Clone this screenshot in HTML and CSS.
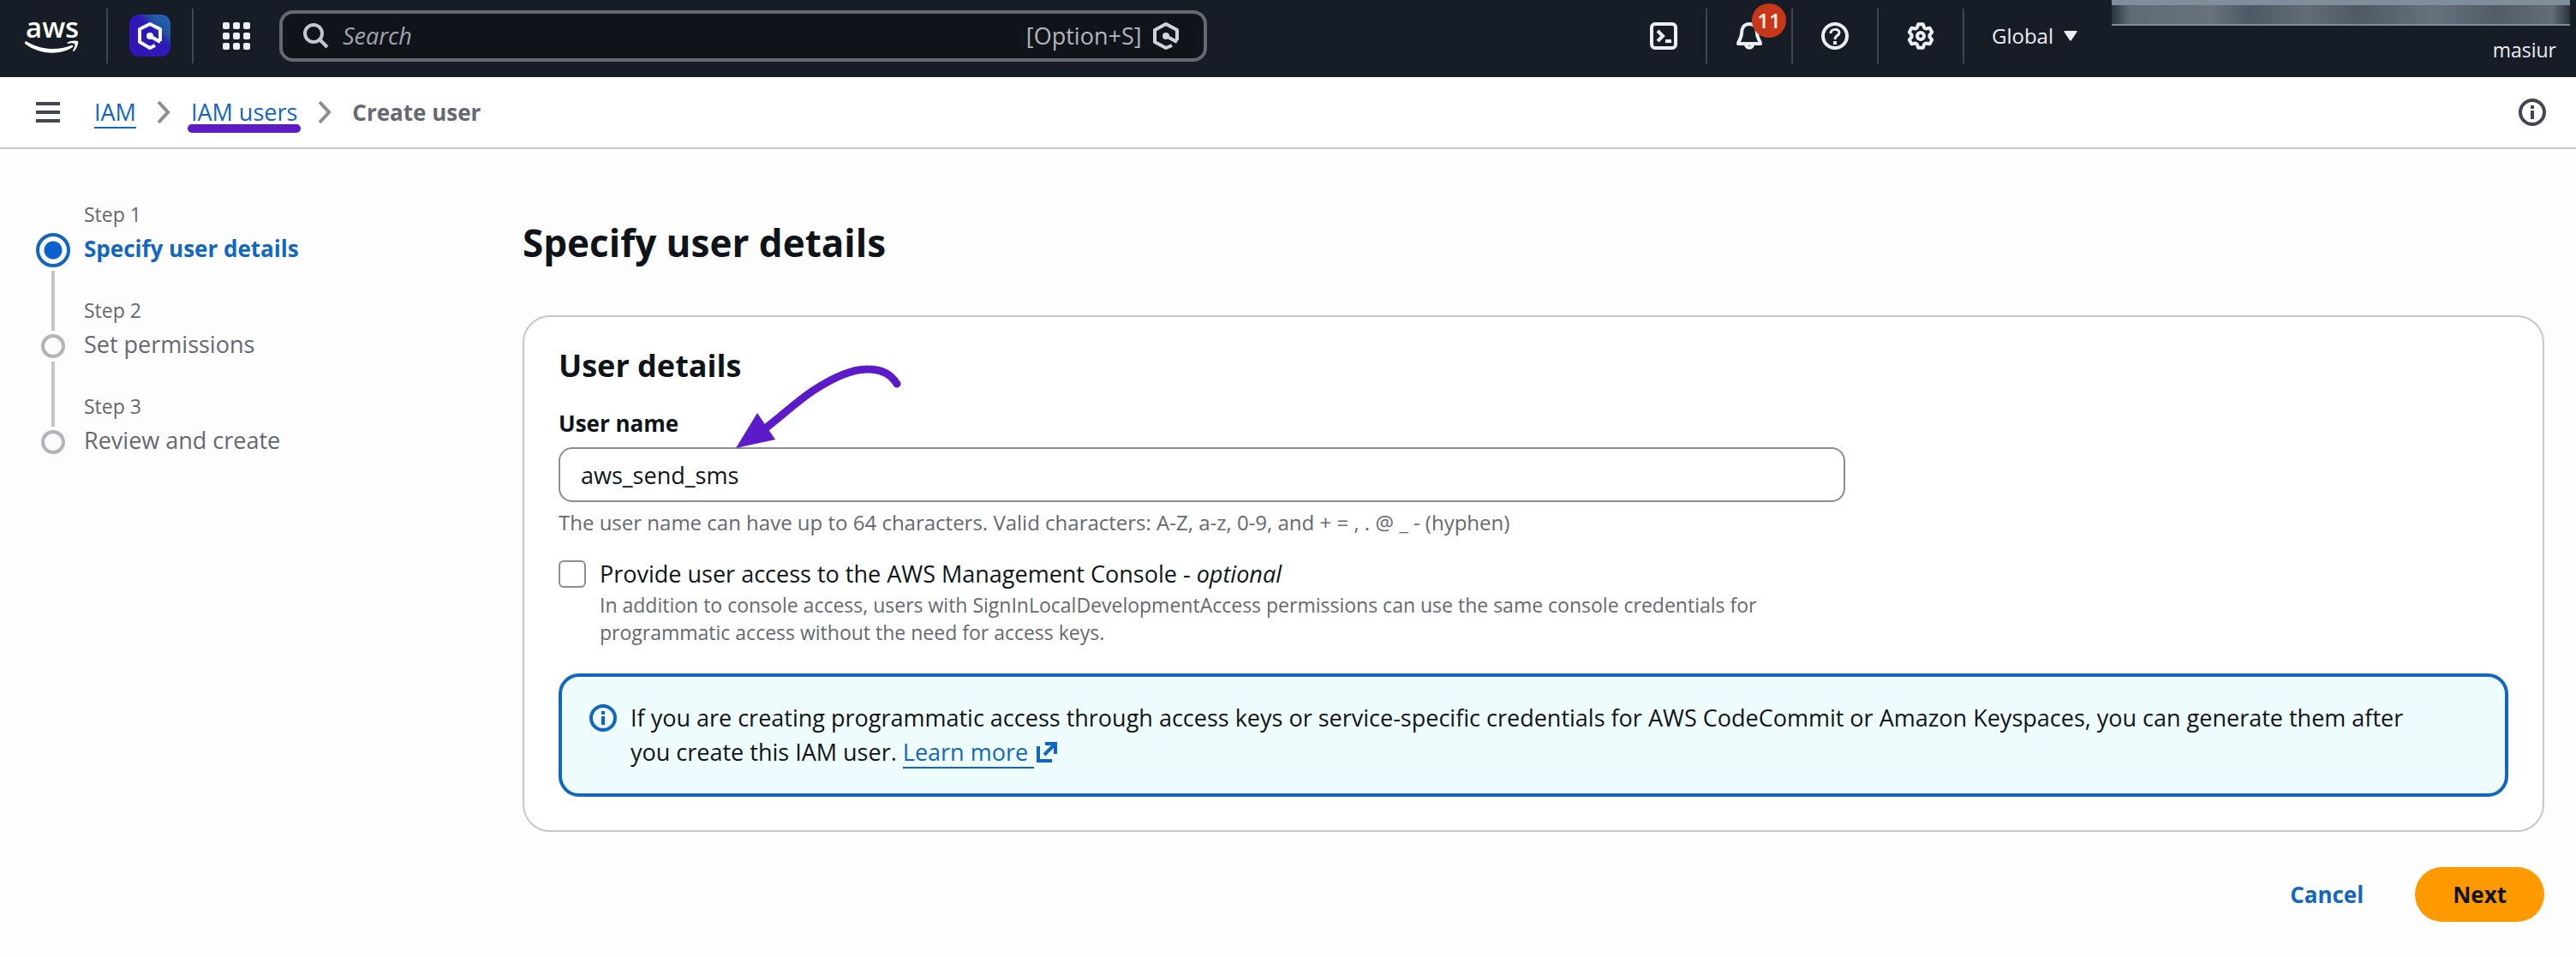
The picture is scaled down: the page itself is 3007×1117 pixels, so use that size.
FILE: index.html
```
<!DOCTYPE html>
<html lang="en">
<head>
    <meta charset="UTF-8">
    <meta name="viewport" content="width=device-width, initial-scale=1.0">
    <title>Create user | IAM</title>
    <link rel="stylesheet" href="styles.css">
</head>
<body>

    <header class="topnav">
        <a class="nav-logo" href="#" aria-label="AWS home">
            <svg width="72" height="64" viewBox="-2 -12 72 64" fill="#fff">
                <text x="2" y="22" class="logo-text">aws</text>
                <path d="M1 27 C2 26 3 26 4 27 C22 37 40 37 55 31 C57 30 58 32 57 33 C42 43 18 42 1 29 Z"/>
                <path d="M50 28 C54 25 60 25 63 26 C64 29 61 36 58 38 C57 38 57 37 57 37 C59 34 60 30 59 29 C57 28 54 28 51 29 Z"/>
            </svg>
        </a>
        <button class="nav-item" aria-label="Amazon Q">
            <svg width="48" height="50" viewBox="0 0 48 50">
                <defs>
                    <linearGradient id="q-fill" x1="1" y1="0" x2="0" y2="1">
                        <stop offset="0" stop-color="#1f6fb8"/>
                        <stop offset="0.28" stop-color="#24509f"/>
                        <stop offset="0.4" stop-color="#2d1ab8"/>
                        <stop offset="1" stop-color="#3313b4"/>
                    </linearGradient>
                </defs>
                <rect width="48" height="49" rx="11" fill="url(#q-fill)"/>
                <g fill="none" stroke="#f3f7ff" stroke-width="4" stroke-linejoin="round">
                    <path d="M36 31V17L24 11 12 17v15l12 7 6-3"/>
                    <path d="M24 25l12 7"/>
                </g>
                <circle cx="24" cy="25" r="4" fill="#f3f7ff"/>
            </svg>
        </button>
        <button class="nav-item nav-last" aria-label="Services">
            <svg width="32" height="32" viewBox="0 0 32 32" fill="#ebeff5">
                <rect x="0" y="0" width="8" height="8" rx="2"/>
                <rect x="12" y="0" width="8" height="8" rx="2"/>
                <rect x="24" y="0" width="8" height="8" rx="2"/>
                <rect x="0" y="12" width="8" height="8" rx="2"/>
                <rect x="12" y="12" width="8" height="8" rx="2"/>
                <rect x="24" y="12" width="8" height="8" rx="2"/>
                <rect x="0" y="24" width="8" height="8" rx="2"/>
                <rect x="12" y="24" width="8" height="8" rx="2"/>
                <rect x="24" y="24" width="8" height="8" rx="2"/>
            </svg>
        </button>

        <div class="search">
            <svg width="32" height="32" viewBox="0 0 32 32" fill="none" stroke="#c6c6cd" stroke-width="4">
                <circle cx="14" cy="13" r="10"/>
                <path d="M21 20l9 9"/>
            </svg>
            <input type="text" id="search" placeholder="Search" aria-label="Search">
            <label for="search">[Option+S]</label>
            <svg width="32" height="32" viewBox="0 0 32 32" fill="none" stroke="#d0d4d8" stroke-width="4" stroke-linejoin="round">
                <path d="M29 21V9L16 2 3 9v14l13 7 7-3"/>
                <path d="M16 16l13 7"/>
                <circle cx="16" cy="16" r="2"/>
            </svg>
        </div>

        <nav class="tools">
            <button class="nav-item" aria-label="CloudShell">
                <svg width="32" height="32" viewBox="0 0 32 32" fill="none" stroke="#ebeff5" stroke-width="4">
                    <rect x="2" y="2" width="28" height="28" rx="4"/>
                    <path d="M9 10l6 6-6 6M18 22h7"/>
                </svg>
            </button>
            <button class="nav-item" aria-label="Notifications">
                <svg width="32" height="32" viewBox="0 0 32 32" fill="none" stroke="#ebeff5" stroke-width="4" stroke-linejoin="round">
                    <path d="M16 2C9 2 7 8 7 13C7 19 3 22 3 25H29C29 22 25 19 25 13C25 8 23 2 16 2Z"/>
                    <path d="M12 26c0 5 8 5 8 0"/>
                </svg>
                <span class="badge">11</span>
            </button>
            <button class="nav-item" aria-label="Help">
                <svg width="32" height="32" viewBox="0 0 32 32" fill="none" stroke="#ebeff5" stroke-width="4">
                    <circle cx="16" cy="16" r="14"/>
                    <path d="M11 13C11 7 21 7 21 12C21 16 16 15 16 20" stroke-width="3"/>
                    <path d="M16 22v4"/>
                </svg>
            </button>
            <button class="nav-item" aria-label="Settings">
                <svg width="32" height="32" viewBox="0 0 32 32" fill="none" stroke="#ebeff5" stroke-width="4" stroke-linejoin="round">
                    <path d="M11.7 6.4L13.3 2.3H18.7L20.3 6.4L22.2 7.5L26.6 6.8L29.2 11.4L26.4 14.9V17.1L29.2 20.6L26.6 25.2L22.2 24.5L20.3 25.6L18.7 29.7H13.3L11.7 25.6L9.8 24.5L5.4 25.2L2.8 20.6L5.6 17.1V14.9L2.8 11.4L5.4 6.8L9.8 7.5Z"/>
                    <circle cx="16" cy="16" r="4"/>
                </svg>
            </button>
            <button class="region">
                Global
                <svg width="16" height="12" viewBox="0 0 16 12" fill="#ebeff5"><path d="M1 0h14q1 0 .6 1L9 11q-1 1-2 0L.4 1Q0 0 1 0z"/></svg>
            </button>
            <div class="account">
                <div class="redacted"></div>
                <span>masiur</span>
            </div>
        </nav>
    </header>

    <div class="crumb-bar">
        <button class="icon-button" aria-label="Open navigation">
            <svg width="28" height="24" viewBox="0 0 28 24" fill="#424650">
                <path d="M0 0h28v4H0zM0 10h28v4H0zM0 20h28v4H0z"/>
            </svg>
        </button>
        <nav class="crumbs">
            <a href="#">IAM</a>
            <svg width="16" height="28" viewBox="0 0 16 28" fill="none" stroke="#8c8c94" stroke-width="4"><path d="M2 2l11 12L2 26"/></svg>
            <a class="marked" href="#">IAM users</a>
            <svg width="16" height="28" viewBox="0 0 16 28" fill="none" stroke="#8c8c94" stroke-width="4"><path d="M2 2l11 12L2 26"/></svg>
            <span class="current">Create user</span>
        </nav>
        <button class="icon-button" aria-label="Info">
            <svg width="32" height="32" viewBox="0 0 32 32" fill="none" stroke="#424650" stroke-width="4">
                <circle cx="16" cy="16" r="14"/>
                <path d="M16 8v4M16 14v10"/>
            </svg>
        </button>
    </div>

    <div class="layout">
        <ol class="steps">
            <li class="step active">
                <span class="track"><span class="dot"></span></span>
                <div class="step-text"><small>Step 1</small><b>Specify user details</b></div>
            </li>
            <li class="step">
                <span class="track"><span class="dot"></span></span>
                <div class="step-text"><small>Step 2</small><span>Set permissions</span></div>
            </li>
            <li class="step">
                <span class="track"><span class="dot"></span></span>
                <div class="step-text"><small>Step 3</small><span>Review and create</span></div>
            </li>
        </ol>

        <main class="content">
            <h1>Specify user details</h1>

            <section class="card">
                <h2>User details</h2>
                <div class="field">
                    <label for="user-name">User name</label>
                    <input type="text" id="user-name" value="aws_send_sms">
                    <p class="hint">The user name can have up to 64 characters. Valid characters: A-Z, a-z, 0-9, and + = , . @ _ - (hyphen)</p>
                </div>
                <div class="check">
                    <input type="checkbox" id="console-access">
                    <div>
                        <label for="console-access">Provide user access to the AWS Management Console - <em>optional</em></label>
                        <p class="description">In addition to console access, users with SignInLocalDevelopmentAccess permissions can use the same console credentials for programmatic access without the need for access keys.</p>
                    </div>
                </div>
                <div class="alert">
                    <svg width="32" height="32" viewBox="0 0 32 32" fill="none" stroke="#1166c0" stroke-width="4">
                        <circle cx="16" cy="16" r="14"/>
                        <path d="M16 8v4M16 14v10"/>
                    </svg>
                    <p>If you are creating programmatic access through access keys or service-specific credentials for AWS CodeCommit or Amazon Keyspaces, you can generate them after you create this IAM user. <a href="#">Learn more&nbsp;</a>
                        <svg width="24" height="24" viewBox="0 0 24 24" fill="none" stroke="#1166c0" stroke-width="4">
                            <path d="M10 2h12v12M21 3L9 15M2 5v17h16"/>
                        </svg>
                    </p>
                </div>

                <svg class="arrow" width="210" height="104" viewBox="0 0 210 104">
                    <path d="M40 77C60 62 75 47 97 32C120 17 142 6 162 7C178 7 188 13 195 24" fill="none" stroke="#5c1ac9" stroke-width="9" stroke-linecap="round"/>
                    <path d="M7 99L32 58L53 89Z" fill="#5c1ac9"/>
                </svg>
            </section>

            <div class="actions">
                <button class="cancel-button">Cancel</button>
                <button class="next-button">Next</button>
            </div>
        </main>
    </div>

</body>
</html>
```
FILE: styles.css
```
* {
    box-sizing: border-box;
}
body {
    margin: 0;
    font-family: "Open Sans", "Noto Sans", sans-serif;
    font-size: 27px;
    line-height: 40px;
    color: #0f141a;
    background-color: #fdfdfe;
}
h1, h2, p, ol {
    margin: 0;
}
button, input {
    font: inherit;
    color: inherit;
}
button {
    background: none;
    border: none;
    padding: 0;
    cursor: pointer;
}
svg {
    display: block;
    flex: none;
}
a {
    color: #1166c0;
    text-decoration: underline;
    text-decoration-thickness: 2px;
    text-underline-offset: 7px;
}

/* Top navigation */
.topnav {
    display: flex;
    align-items: center;
    height: 90px;
    padding-bottom: 6px;
    background-color: #161d26;
    color: #ebeff5;
}
.nav-logo {
    display: flex;
    align-items: center;
    width: 126px;
    height: 64px;
    padding-left: 26px;
    border-right: 2px solid #424650;
}
.logo-text {
    font-size: 33px;
    font-weight: 600;
}
.nav-item {
    position: relative;
    display: flex;
    align-items: center;
    justify-content: center;
    width: 100px;
    height: 64px;
    border-right: 2px solid #424650;
}
.nav-last {
    border-right: none;
}
.search {
    flex: 0 0 36%;
    display: flex;
    align-items: center;
    gap: 12px;
    height: 60px;
    padding: 0 28px 0 22px;
    border: 4px solid #656871;
    border-radius: 16px;
    background-color: #0f141a;
    color: #b4b4bb;
}
.search input {
    flex: 1;
    min-width: 0;
    padding: 0 4px;
    border: none;
    background: none;
    font-style: italic;
}
.search input::placeholder {
    color: #a4a4ad;
    opacity: 1;
}
.tools {
    display: flex;
    align-items: center;
    margin-left: auto;
    padding-right: 7px;
}
.badge {
    position: absolute;
    top: -6px;
    right: 6px;
    width: 40px;
    height: 40px;
    border-radius: 50%;
    background-color: #c7381a;
    color: #fff3e0;
    font-size: 24px;
    font-weight: 600;
    line-height: 40px;
}
.region {
    display: flex;
    align-items: center;
    gap: 12px;
    padding: 0 40px 0 32px;
    font-size: 24px;
}
.account {
    display: flex;
    flex-direction: column;
    align-items: flex-end;
    gap: 12px;
    width: 535px;
    height: 84px;
    font-size: 23px;
    line-height: 32px;
}
.account span {
    padding-right: 16px;
}
/* Blurred account id */
.redacted {
    width: 100%;
    height: 30px;
    border-bottom: 2px solid #7f8c98;
    background: linear-gradient(#808e9c 6px, transparent 6px), linear-gradient(90deg, #2b343e, #5f6b76 4%, #67727d 22%, #4c5863 30%, #616c77 42%, #4f5a65 54%, #65717c 70%, #515c67 84%, #626d78 96%, #2b343e);
}

/* Breadcrumbs */
.crumb-bar {
    display: flex;
    align-items: center;
    height: 84px;
    padding: 0 35px 0 42px;
    border-bottom: 2px solid #c6c6cd;
    background-color: #fff;
}
.crumbs {
    flex: 1;
    display: flex;
    align-items: center;
    gap: 24px;
    margin-left: 40px;
}
.marked {
    position: relative;
    text-decoration: none;
}
.marked::after {
    content: "";
    position: absolute;
    left: -4px;
    right: -4px;
    bottom: -4px;
    height: 10px;
    border-radius: 5px;
    background-color: #5c1ac9;
}
.current {
    font-size: 26px;
    font-weight: 700;
    color: #656871;
}

/* Wizard */
.layout {
    display: flex;
    padding: 60px 37px 40px 42px;
}
.steps {
    flex: 0 0 568px;
    padding: 0;
    list-style: none;
    color: #656871;
}
.step {
    display: flex;
    gap: 16px;
    height: 112px;
}
.track {
    display: flex;
    flex-direction: column;
    align-items: center;
    gap: 4px;
    width: 40px;
}
.track::before, .track::after {
    content: "";
    width: 4px;
    background-color: #c6c6c8;
}
.track::before {
    height: 40px;
}
.track::after {
    flex: 1;
}
.dot {
    width: 28px;
    height: 28px;
    border: 4px solid #b4b4b8;
    border-radius: 50%;
}
.active .track::before {
    height: 34px;
    background: none;
}
.active .dot {
    width: 40px;
    height: 40px;
    border-color: #1166c0;
    background: radial-gradient(#0b62cc 10px, transparent 11px);
}
.step:last-child .track::after {
    background: none;
}
.step-text {
    display: flex;
    flex-direction: column;
    gap: 4px;
}
.step-text small {
    font-size: 23px;
    line-height: 32px;
}
.active b {
    font-size: 26px;
    color: #1166c0;
}
.content {
    flex: 1;
    min-width: 0;
    padding-top: 21px;
}
h1 {
    font-size: 44px;
    line-height: 56px;
}
h2 {
    font-size: 36px;
    line-height: 44px;
}
.card {
    position: relative;
    margin-top: 57px;
    padding: 35px 40px 39px;
    border: 2px solid #c6c6cd;
    border-radius: 32px;
    background-color: #fff;
}
.field {
    display: flex;
    flex-direction: column;
    gap: 8px;
    width: 66%;
    margin-top: 25px;
}
.field label {
    font-size: 26px;
    font-weight: 700;
}
.field input {
    height: 64px;
    padding: 0 24px;
    border: 2px solid #8c8c94;
    border-radius: 16px;
    background-color: #fff;
}
.hint {
    font-size: 24px;
    line-height: 32px;
    color: #656871;
}
.check {
    display: flex;
    align-items: flex-start;
    gap: 16px;
    width: 66%;
    margin-top: 24px;
}
.check input {
    appearance: none;
    flex: none;
    width: 32px;
    height: 32px;
    margin: 4px 0 0;
    border: 2px solid #8c8c94;
    border-radius: 6px;
    background-color: #fff;
}
.check label {
    display: block;
}
.description {
    font-size: 23px;
    line-height: 32px;
    color: #656871;
}
.alert {
    display: flex;
    gap: 16px;
    margin-top: 32px;
    padding: 28px 80px 28px 32px;
    border: 4px solid #1166c0;
    border-radius: 24px;
    background-color: #effcfd;
}
.alert > svg {
    margin-top: 4px;
}
.alert p svg {
    display: inline-block;
    vertical-align: -2px;
    margin-left: -4px;
}
/* Hand drawn pointer to the user name box */
.arrow {
    position: absolute;
    left: 240px;
    top: 54px;
}
.actions {
    display: flex;
    justify-content: flex-end;
    align-items: center;
    gap: 60px;
    margin-top: 41px;
    font-size: 26px;
    font-weight: 700;
}
.cancel-button {
    color: #1166c0;
}
.next-button {
    height: 64px;
    padding: 0 44px;
    border-radius: 32px;
    background-color: #ff9900;
}
```
